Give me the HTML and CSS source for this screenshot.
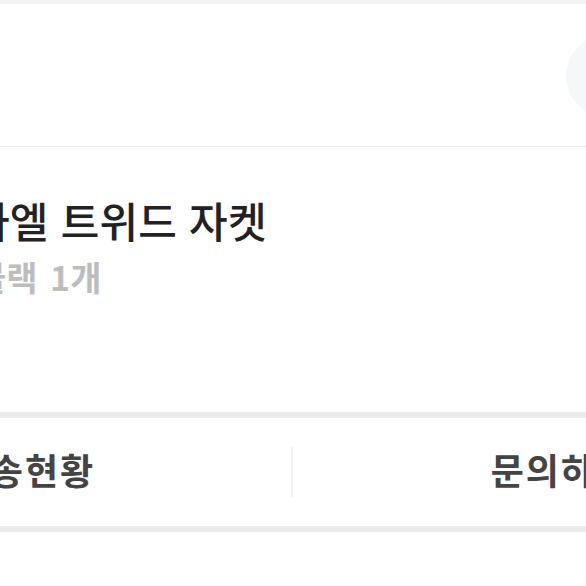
FILE: index.html
```html
<!DOCTYPE html>
<html lang="ko">
<head>
  <meta charset="UTF-8" />
  <title>주문 상세</title>
  <link rel="stylesheet" href="styles.css">
</head>
<body>

<div class="page">
  <div class="top-gap"></div>

  <div class="header">
    <div class="avatar"></div>
  </div>

  <div class="product">
    <h1 class="product-name">라엘 트위드 자켓</h1>
    <p class="product-option">블랙 1개</p>
  </div>

  <div class="band"></div>

  <div class="actions">
    <button class="action action-left">배송현황</button>
    <span class="divider"></span>
    <button class="action action-right">문의하기</button>
  </div>

  <div class="band"></div>
</div>

</body>
</html>
```

FILE: styles.css
```css
html, body {
  margin: 0;
  background: #fff;
}
.page {
  width: 586px;
  height: 586px;
  overflow: hidden;
  font-family: "Noto Sans CJK KR", "Noto Sans", sans-serif;
}
.top-gap {
  height: 4px;
  background: #f4f4f4;
}
.header {
  height: 142px;
  border-bottom: 1px solid #efefef;
  display: flex;
  align-items: center;
  justify-content: flex-end;
}
.avatar {
  flex: none;
  width: 82px;
  height: 82px;
  border-radius: 50%;
  background: #f6f7f8;
  margin-right: -62px;
  margin-top: 2px;
}
.product {
  height: 265px;
  padding-top: 47px;
  box-sizing: border-box;
}
.product-name {
  margin: 0 0 0 -29px;
  font-size: 42px;
  font-weight: 500;
  line-height: 52px;
  color: #222;
  letter-spacing: 0.2px;
  white-space: nowrap;
}
.product-option {
  margin: 10px 0 0 -25px;
  font-size: 34px;
  font-weight: 700;
  line-height: 42px;
  color: #bdbdbd;
  word-spacing: 3px;
  white-space: nowrap;
}
.band {
  height: 6px;
  background: #ebebeb;
}
.actions {
  display: flex;
  align-items: center;
  height: 108px;
  margin-left: -241px;
}
.action {
  height: 100%;
  border: 0;
  background: #fff;
  font-family: inherit;
  font-size: 36px;
  font-weight: 700;
  color: #444;
  letter-spacing: 2px;
  padding: 0 0 7px;
  white-space: nowrap;
}
.action-left {
  flex: 0 0 532px;
}
.action-right {
  flex: 0 0 536px;
}
.divider {
  flex: none;
  width: 2px;
  height: 50px;
  background: #f3f3f3;
}
```
